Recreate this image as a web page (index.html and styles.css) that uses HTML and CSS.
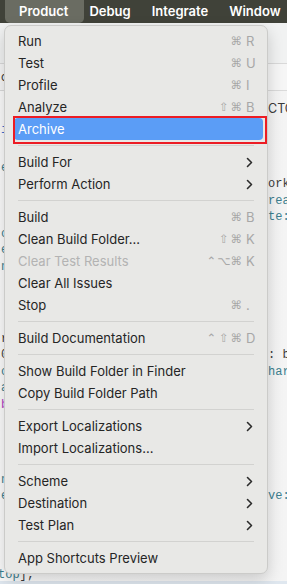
FILE: index.html
```html
<!DOCTYPE html>
<html lang="en">
<head>
<meta charset="utf-8">
<title>Xcode Product menu</title>
<link rel="stylesheet" href="styles.css">
</head>
<body>
<div class="screen">
  <header class="menubar">
    <span class="mb-item active">Product</span>
    <span class="mb-item">Debug</span>
    <span class="mb-item">Integrate</span>
    <span class="mb-item">Window</span>
  </header>

  <main class="editor">
    <div class="toolbar"></div>
    <div class="jumpbar"><span class="l dark">c</span></div>
    <div class="inspector"><span class="l"></span><span class="r sans">CTO</span></div>
    <div class="ln"><span class="l blue">i</span><span class="r"></span></div>
    <div class="gap g1"></div>
    <div class="ln"><span class="l teal">e</span><span class="r"></span></div>
    <div class="ln"><span class="l"></span><span class="r dark">ork</span></div>
    <div class="ln"><span class="l"></span><span class="r teal">rea</span></div>
    <div class="ln"><span class="l"></span><span class="r teal">te:</span></div>
    <div class="ln"><span class="l teal">o</span><span class="r"></span></div>
    <div class="ln"><span class="l teal">e</span><span class="r"></span></div>
    <div class="ln"><span class="l teal">n</span><span class="r"></span></div>
    <div class="gap g2"></div>
    <div class="ln"><span class="l dark">r</span><span class="r"></span></div>
    <div class="ln"><span class="l dark">0</span><span class="r dark">: b:</span></div>
    <div class="ln"><span class="l teal">o</span><span class="r teal">har</span></div>
    <div class="ln"><span class="l teal">a</span><span class="r"></span></div>
    <div class="ln"><span class="l purple">b</span><span class="r"></span></div>
    <div class="gap g3"></div>
    <div class="ln"><span class="l teal">n</span><span class="r"></span></div>
    <div class="ln"><span class="l teal">e</span><span class="r teal">ve:</span></div>
    <div class="gap g4"></div>
    <div class="ln last"><span class="tail"><span class="teal">top</span><span class="dark">];</span></span></div>
    <div class="statusbar"></div>
  </main>

  <nav class="menu" aria-label="Product">
    <div class="mi"><span>Run</span><span class="sc"><span class="mod">⌘</span><span class="key">R</span></span></div>
    <div class="mi"><span>Test</span><span class="sc"><span class="mod">⌘</span><span class="key">U</span></span></div>
    <div class="mi"><span>Profile</span><span class="sc"><span class="mod">⌘</span><span class="key">I</span></span></div>
    <div class="mi"><span>Analyze</span><span class="sc"><span class="mod">⇧</span><span class="mod">⌘</span><span class="key">B</span></span></div>
    <div class="mi sel"><span>Archive</span></div>
    <div class="sep"></div>
    <div class="mi"><span>Build For</span><svg class="chev" viewBox="0 0 7 11" width="7" height="11"><path d="M1.5 1.5 L5.5 5.5 L1.5 9.5"/></svg></div>
    <div class="mi"><span>Perform Action</span><svg class="chev" viewBox="0 0 7 11" width="7" height="11"><path d="M1.5 1.5 L5.5 5.5 L1.5 9.5"/></svg></div>
    <div class="sep"></div>
    <div class="mi"><span>Build</span><span class="sc"><span class="mod">⌘</span><span class="key">B</span></span></div>
    <div class="mi"><span>Clean Build Folder...</span><span class="sc"><span class="mod">⇧</span><span class="mod">⌘</span><span class="key">K</span></span></div>
    <div class="mi dis"><span>Clear Test Results</span><span class="sc"><span class="mod">⌃</span><span class="mod">⌥</span><span class="mod">⌘</span><span class="key">K</span></span></div>
    <div class="mi"><span>Clear All Issues</span></div>
    <div class="mi"><span>Stop</span><span class="sc"><span class="mod">⌘</span><span class="key">.</span></span></div>
    <div class="sep"></div>
    <div class="mi"><span>Build Documentation</span><span class="sc"><span class="mod">⌃</span><span class="mod">⇧</span><span class="mod">⌘</span><span class="key">D</span></span></div>
    <div class="sep"></div>
    <div class="mi"><span>Show Build Folder in Finder</span></div>
    <div class="mi"><span>Copy Build Folder Path</span></div>
    <div class="sep"></div>
    <div class="mi"><span>Export Localizations</span><svg class="chev" viewBox="0 0 7 11" width="7" height="11"><path d="M1.5 1.5 L5.5 5.5 L1.5 9.5"/></svg></div>
    <div class="mi"><span>Import Localizations...</span></div>
    <div class="sep"></div>
    <div class="mi"><span>Scheme</span><svg class="chev" viewBox="0 0 7 11" width="7" height="11"><path d="M1.5 1.5 L5.5 5.5 L1.5 9.5"/></svg></div>
    <div class="mi"><span>Destination</span><svg class="chev" viewBox="0 0 7 11" width="7" height="11"><path d="M1.5 1.5 L5.5 5.5 L1.5 9.5"/></svg></div>
    <div class="mi"><span>Test Plan</span><svg class="chev" viewBox="0 0 7 11" width="7" height="11"><path d="M1.5 1.5 L5.5 5.5 L1.5 9.5"/></svg></div>
    <div class="sep"></div>
    <div class="mi"><span>App Shortcuts Preview</span></div>
  </nav>
</div>
</body>
</html>
```
FILE: styles.css
```css
* { box-sizing: border-box; margin: 0; padding: 0; }

html, body {
  width: 287px;
  height: 584px;
  overflow: hidden;
}

body {
  background: #f8f8f8;
  font-family: Inter, "Noto Sans", "Liberation Sans", sans-serif;
}

.screen {
  position: relative;
  width: 287px;
  height: 584px;
  overflow: hidden;
}

/* ---------- top menu bar ---------- */
.menubar {
  height: 23px;
  background: #404239;
  display: flex;
  align-items: stretch;
  padding-left: 5px;
  white-space: nowrap;
}

.mb-item {
  padding: 0 10.5px;
  color: #ffffff;
  font-size: 13px;
  font-weight: 600;
  line-height: 23px;
}

.mb-item.active {
  background: #6a6c62;
  border-radius: 0 0 5px 5px;
  padding: 0 16px 0 14px;
  margin-right: -5.5px;
}

/* ---------- editor behind the menu ---------- */
.editor {
  display: flex;
  flex-direction: column;
  font-family: "Liberation Mono", "DejaVu Sans Mono", monospace;
  font-size: 12px;
  background: linear-gradient(90deg, #fbfbfb, #f4f4f4);
  height: 561px;
  overflow: hidden;
}

.toolbar {
  height: 41px;
  flex: none;
  background: #f1f2f2;
  border-bottom: 1px solid #d9d9d9;
}

.jumpbar {
  height: 27px;
  flex: none;
  background: #f6f6f6;
  border-bottom: 1px solid #dadada;
  font-family: Inter, sans-serif;
  font-size: 12px;
  line-height: 26px;
  display: grid;
  grid-template-columns: 266px 1fr;
}

.inspector {
  flex: none;
  padding-top: 10px;
  height: 31px;
  line-height: 16px;
  display: grid;
  grid-template-columns: 266px 1fr;
}

.ln {
  flex: none;
  height: 16.5px;
  line-height: 16.5px;
  display: grid;
  grid-template-columns: 266px 1fr;
  white-space: pre;
}

.l {
  padding-left: 1px;
  overflow: hidden;
}

.r {
  padding-left: 2px;
  overflow: hidden;
}

.sans {
  font-family: Inter, sans-serif;
  font-size: 12.5px;
  color: #3a3a3a;
}

.teal { color: #3d7f8f; }
.dark { color: #3b3b3b; }
.blue { color: #3f6fd0; }
.purple { color: #b23fc4; }

.gap { flex: none; }
.g1 { height: 21px; }
.g2 { height: 55.5px; }
.g3 { height: 58.5px; }
.g4 { height: 62.5px; }

.ln.last {
  display: block;
  height: 13px;
  line-height: 16.5px;
  overflow: visible;
}

.tail {
  margin-left: -2px;
}

.statusbar {
  margin-top: auto;
  height: 3px;
  flex: none;
  background: #dfe7ef;
}

/* ---------- dropdown menu ---------- */
.menu {
  position: absolute;
  left: 4px;
  top: 25px;
  width: 264px;
  background: #e8e8e6;
  border: 1px solid #cbcbc9;
  border-radius: 7px;
  box-shadow: 0 6px 16px rgba(0, 0, 0, 0.18);
  padding: 4px 4px 4px 9px;
  font-family: Inter, "Noto Sans", sans-serif;
}

.mi {
  height: 22px;
  display: flex;
  align-items: center;
  justify-content: space-between;
  padding: 0 9px 0 4px;
  font-size: 13px;
  color: #252525;
  border-radius: 4px;
  white-space: nowrap;
}

.mi.dis { color: #b3b3b3; }

.mi.sel {
  position: relative;
  background: #5b9df6;
  color: #ffffff;
}

.mi.sel::after {
  content: "";
  position: absolute;
  left: -1px;
  right: -4px;
  top: -2px;
  bottom: -4px;
  border: 2px solid #ec1c24;
}

.sep {
  height: 11px;
  display: flex;
  align-items: center;
  padding: 0 9px 0 4px;
}

.sep::before {
  content: "";
  flex: 1;
  height: 1px;
  background: #d2d2d0;
}

.sc {
  display: flex;
  align-items: center;
  color: #a7a7a7;
}

.mod {
  width: 12.5px;
  text-align: center;
  font-family: "DejaVu Sans", sans-serif;
  font-size: 11.5px;
  line-height: 16px;
}

.key {
  width: 8px;
  margin-left: 3.5px;
  font-size: 13px;
}

.chev {
  margin-right: 1px;
}

.chev path {
  fill: none;
  stroke: #2b2b2b;
  stroke-width: 1.6;
  stroke-linecap: round;
  stroke-linejoin: round;
}
```
